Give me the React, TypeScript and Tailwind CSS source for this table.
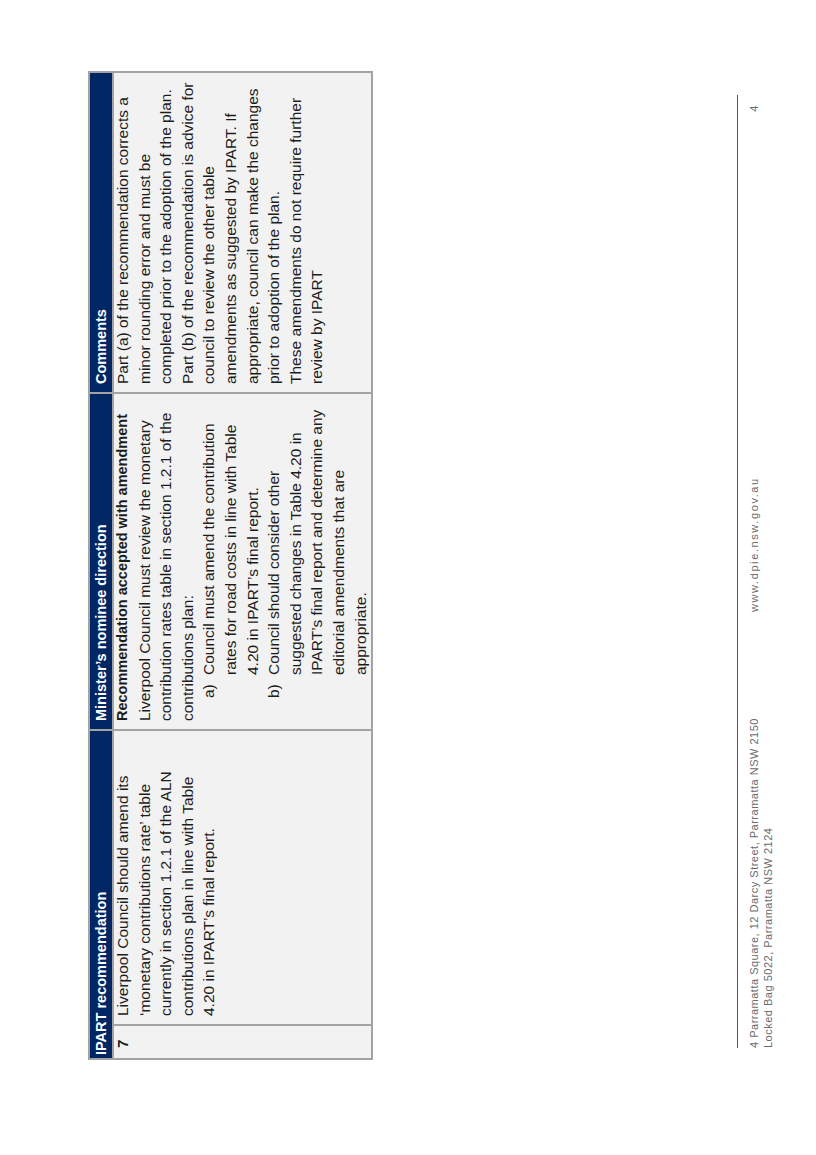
const ipartLines = [
  "Liverpool Council should amend its",
  "\u2018monetary contributions rate\u2019 table",
  "currently in section 1.2.1 of the ALN",
  "contributions plan in line with Table",
  "4.20 in IPART\u2019s final report.",
];

const introLines = [
  "Liverpool Council must review the monetary",
  "contribution rates table in section 1.2.1 of the",
  "contributions plan:",
];

const directionItems = [
  {
    mark: "a)",
    lines: ["Council must amend the contribution", "rates for road costs in line with Table", "4.20 in IPART\u2019s final report."],
  },
  {
    mark: "b)",
    lines: [
      "Council should consider other",
      "suggested changes in Table 4.20 in",
      "IPART\u2019s final report and determine any",
      "editorial amendments that are",
      "appropriate.",
    ],
  },
];

const commentLines = [
  "Part (a) of the recommendation corrects a",
  "minor rounding error and must be",
  "completed prior to the adoption of the plan.",
  "Part (b) of the recommendation is advice for",
  "council to review the other table",
  "amendments as suggested by IPART. If",
  "appropriate, council can make the changes",
  "prior to adoption of the plan.",
  "These amendments do not require further",
  "review by IPART",
];

function Lines({ lines }: { lines: string[] }) {
  return (
    <>
      {lines.map((line) => (
        <div key={line} className="whitespace-nowrap">
          {line}
        </div>
      ))}
    </>
  );
}

export default function App() {
  return (
    <div className="h-[1155px] w-[816px] overflow-hidden bg-white font-['Liberation_Sans',Arial,sans-serif]">
      {/* landscape page, turned a quarter to the left */}
      <div className="flex h-[816px] w-[1155px] origin-top-left flex-col [transform:translateY(1155px)_rotate(-90deg)]">
        <table className="ml-[95px] mt-[88px] w-[987px] table-fixed border-collapse">
          <colgroup>
            <col className="w-[34px]" />
            <col className="w-[295px]" />
            <col className="w-[337px]" />
            <col className="w-[321px]" />
          </colgroup>
          <thead>
            <tr className="h-[22px] bg-[#002664] text-left text-[14.5px] font-bold leading-[22px] text-white">
              <th colSpan={2} className="border-2 border-[#a3a3a3] p-0 pl-[3px]">
                IPART recommendation
              </th>
              <th className="border-2 border-[#a3a3a3] p-0 pl-2">Minister&rsquo;s nominee direction</th>
              <th className="border-2 border-[#a3a3a3] p-0 pl-2">Comments</th>
            </tr>
          </thead>
          <tbody>
            <tr className="h-[256px] bg-[#f2f2f2] align-top text-[15.5px] leading-[21.6px] text-[#1c1c1c]">
              <td className="border-2 border-[#a3a3a3] p-0 pl-[10px]">
                <div className="-mt-[2px] text-[15px] font-bold">7</div>
              </td>
              <td className="border-2 border-[#a3a3a3] p-0 pl-2">
                <div className="-mt-[2px]">
                  <Lines lines={ipartLines} />
                </div>
              </td>
              <td className="border-2 border-[#a3a3a3] p-0 pl-2">
                <div className="-mt-[2px]">
                  <div className="whitespace-nowrap text-[14.5px] font-bold">Recommendation accepted with amendment</div>
                  <Lines lines={introLines} />
                  {directionItems.map((item) => (
                    <div key={item.mark} className="ml-[23px] flex">
                      <span className="w-[23px] shrink-0">{item.mark}</span>
                      <div>
                        <Lines lines={item.lines} />
                      </div>
                    </div>
                  ))}
                </div>
              </td>
              <td className="border-2 border-[#a3a3a3] p-0 pl-2">
                <div className="-mt-[2px]">
                  <Lines lines={commentLines} />
                </div>
              </td>
            </tr>
          </tbody>
        </table>

        <footer className="ml-[107px] mt-[364px] w-[953px] border-t-[1.5px] border-[#555555] pt-[9px] text-[11px] leading-[14px] tracking-[0.5px] text-[#6b6b6b]">
          <div className="flex">
            <div className="w-[436px]">
              <div>4 Parramatta Square, 12 Darcy Street, Parramatta NSW 2150</div>
              <div>Locked Bag 5022, Parramatta NSW 2124</div>
            </div>
            <div className="flex-1 tracking-[1.6px]">www.dpie.nsw.gov.au</div>
            <div className="pr-[10px]">4</div>
          </div>
        </footer>
      </div>
    </div>
  );
}
